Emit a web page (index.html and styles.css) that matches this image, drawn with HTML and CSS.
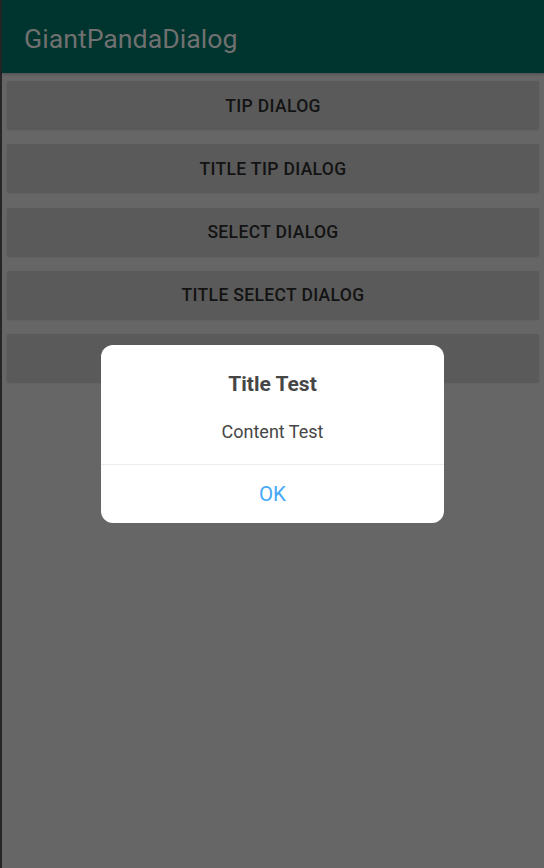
FILE: index.html
```html
<!DOCTYPE html>
<html>
<head>
<meta charset="utf-8">
<link rel="stylesheet" href="styles.css">
</head>
<body>
<div class="frame">
  <div class="edge"></div>
  <div class="screen">
    <header class="appbar">GiantPandaDialog</header>
    <div class="list">
      <div class="btn">TIP DIALOG</div>
      <div class="btn">TITLE TIP DIALOG</div>
      <div class="btn">SELECT DIALOG</div>
      <div class="btn">TITLE SELECT DIALOG</div>
      <div class="btn">LOADING DIALOG</div>
    </div>
    <div class="dialog">
      <div class="d-title">Title Test</div>
      <div class="d-content">Content Test</div>
      <div class="d-ok">OK</div>
    </div>
  </div>
</div>
</body>
</html>
```

FILE: styles.css
```css
html, body {
  margin: 0;
  padding: 0;
  background: #666666;
}
body {
  font-family: Roboto, "Noto Sans", sans-serif;
}
.frame {
  display: flex;
  width: 544px;
  height: 868px;
  overflow: hidden;
}
.edge {
  width: 2px;
  background: #262626;
  flex: none;
}
.screen {
  position: relative;
  flex: 1;
  background: #666666;
}
.appbar {
  height: 73px;
  background: #00342f;
  color: #707070;
  font-size: 26.7px;
  line-height: 78px;
  padding-left: 22px;
  box-shadow: 0 1px 3px rgba(0,0,0,0.25);
}
.list {
  display: flex;
  flex-direction: column;
  gap: 15.3px;
  padding: 8px 5px 0 5px;
}
.btn {
  height: 48px;
  background: #5a5a5a;
  border-radius: 2px;
  box-shadow: 0 1px 2px rgba(0,0,0,0.15);
  display: flex;
  align-items: center;
  justify-content: center;
  color: #131313;
  font-size: 17.5px;
  font-weight: 500;
  letter-spacing: 0.35px;
  padding-top: 1px;
  box-sizing: border-box;
}
.dialog {
  position: absolute;
  left: 99px;
  top: 345px;
  width: 343px;
  height: 178px;
  background: #ffffff;
  border-radius: 12px;
  display: flex;
  flex-direction: column;
  align-items: stretch;
}
.d-title {
  margin-top: 27px;
  height: 24px;
  line-height: 24px;
  text-align: center;
  font-size: 21px;
  font-weight: 700;
  color: #464646;
}
.d-content {
  margin-top: 25px;
  height: 22px;
  line-height: 22px;
  text-align: center;
  font-size: 18px;
  color: #464646;
  padding-bottom: 21px;
  border-bottom: 1px solid #ececec;
}
.d-ok {
  flex: 1;
  display: flex;
  align-items: center;
  justify-content: center;
  font-size: 20.5px;
  color: #45a9f7;
}
```
